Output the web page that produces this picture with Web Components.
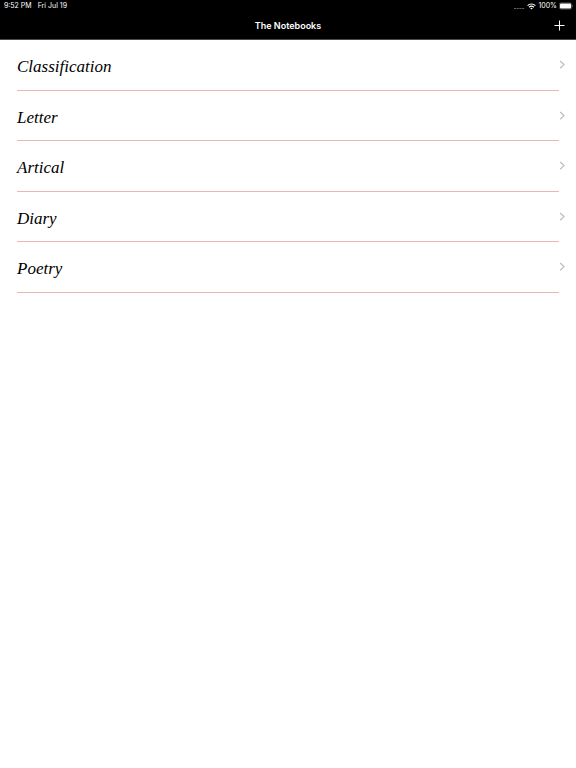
<!DOCTYPE html>
<html lang="en">
<head>
<meta charset="utf-8">
<meta name="viewport" content="width=device-width, initial-scale=1">
<title>The Notebooks</title>
<style>
  body {
    margin: 0;
    background: #fff;
    font-family: Inter, "Liberation Sans", sans-serif;
  }
</style>
</head>
<body>
<notebook-app></notebook-app>
<script>
class StatusBar extends HTMLElement {
  constructor() {
    super();
    this.shadow = this.attachShadow({ mode: 'open' });
    this.shadow.innerHTML = `
      <style>
        :host {
          display: flex;
          justify-content: space-between;
          align-items: center;
          height: 12px;
          padding: 0 3px 0 4px;
          color: #fff;
          font-size: 7px;
          line-height: 12px;
          font-weight: 400;
        }
        .group {
          display: flex;
          align-items: center;
        }
        .left {
          gap: 6px;
        }
        .right {
          gap: 2px;
        }
        svg {
          display: block;
        }
      </style>
      <div class="group left"><span>9:52 PM</span><span>Fri Jul 19</span></div>
      <div class="group right">
        <svg width="11" height="8" viewBox="0 0 11 8" fill="#666">
          <rect x="0" y="6" width="2" height="1"/>
          <rect x="2.7" y="6" width="2" height="1"/>
          <rect x="5.4" y="6" width="2" height="1"/>
          <rect x="8.1" y="6" width="2" height="1"/>
        </svg>
        <svg width="9" height="7" viewBox="0 0 9 7" fill="none" stroke="#fff" stroke-width="1.2">
          <path d="M0.6 2.6a5.6 5.6 0 0 1 7.8 0"/>
          <path d="M2.1 4.2a3.5 3.5 0 0 1 4.8 0"/>
          <path d="M4.5 6.6L3.2 5.3a1.9 1.9 0 0 1 2.6 0z" fill="#fff" stroke="none"/>
        </svg>
        <span>100%</span>
        <svg width="14" height="8" viewBox="0 0 14 8">
          <rect x="0.4" y="0.9" width="12.2" height="6.2" rx="1.6" fill="none" stroke="#999" stroke-width="0.5"/>
          <rect x="1" y="1.4" width="11" height="5.2" rx="1" fill="#fff"/>
          <path d="M13.1 3a1.1 1.1 0 0 1 0 2z" fill="#999"/>
        </svg>
      </div>
    `;
  }
}

class NavBar extends HTMLElement {
  constructor() {
    super();
    this.shadow = this.attachShadow({ mode: 'open' });
    this.shadow.innerHTML = `
      <style>
        :host {
          display: grid;
          grid-template-columns: 1fr auto 1fr;
          align-items: center;
          box-sizing: border-box;
          height: 28px;
          padding: 0 10px;
          border-bottom: 1px solid #4a4a4a;
          color: #fff;
        }
        h1 {
          grid-column: 2;
          margin: 0;
          font-size: 9px;
          line-height: 12px;
          font-weight: 600;
        }
        button {
          justify-self: end;
          padding: 0;
          border: 0;
          background: none;
          color: inherit;
          cursor: pointer;
        }
        svg {
          display: block;
        }
      </style>
      <h1><slot></slot></h1>
      <button type="button" aria-label="Add notebook">
        <svg width="13" height="13" viewBox="0 0 13 13" stroke="currentColor">
          <path d="M6.5 1.5v10M1.5 6.5h10"/>
        </svg>
      </button>
    `;
  }
}

class NotebookRow extends HTMLElement {
  constructor() {
    super();
    this.shadow = this.attachShadow({ mode: 'open' });
    this.shadow.innerHTML = `
      <style>
        :host {
          display: grid;
          padding-left: 17px;
        }
        a {
          display: grid;
          grid-template-columns: 1fr 17px;
          grid-template-rows: 1fr 1px;
          align-items: center;
          color: #000;
          text-decoration: none;
        }
        .name {
          padding-top: 4px;
          font-family: "Liberation Serif", cursive;
          font-style: italic;
          font-size: 17px;
          line-height: 20px;
        }
        .line {
          grid-row: 2;
          height: 1px;
          background: #ebb5b1;
        }
        svg {
          display: block;
        }
      </style>
      <a href="#">
        <span class="name"><slot></slot></span>
        <svg width="7" height="10" viewBox="0 0 7 10" fill="none" stroke="#bcbcc0" stroke-width="1.2">
          <path d="M1.2 1l3.8 3.6L1.2 8.2"/>
        </svg>
        <span class="line"></span>
      </a>
    `;
  }
}

class NotebookApp extends HTMLElement {
  constructor() {
    super();
    this.shadow = this.attachShadow({ mode: 'open' });
    this.render();
  }

  render() {
    const names = ['Classification', 'Letter', 'Artical', 'Diary', 'Poetry'];
    this.shadow.innerHTML = `
      <style>
        :host {
          display: block;
        }
        header {
          background: #000;
        }
        main {
          display: grid;
          grid-auto-rows: 51px 50px;
        }
      </style>
      <header>
        <status-bar></status-bar>
        <nav-bar>The Notebooks</nav-bar>
      </header>
      <main>
        ${names.map((name) => `<notebook-row>${name}</notebook-row>`).join('')}
      </main>
    `;
  }
}

customElements.define('status-bar', StatusBar);
customElements.define('nav-bar', NavBar);
customElements.define('notebook-row', NotebookRow);
customElements.define('notebook-app', NotebookApp);
</script>
</body>
</html>
